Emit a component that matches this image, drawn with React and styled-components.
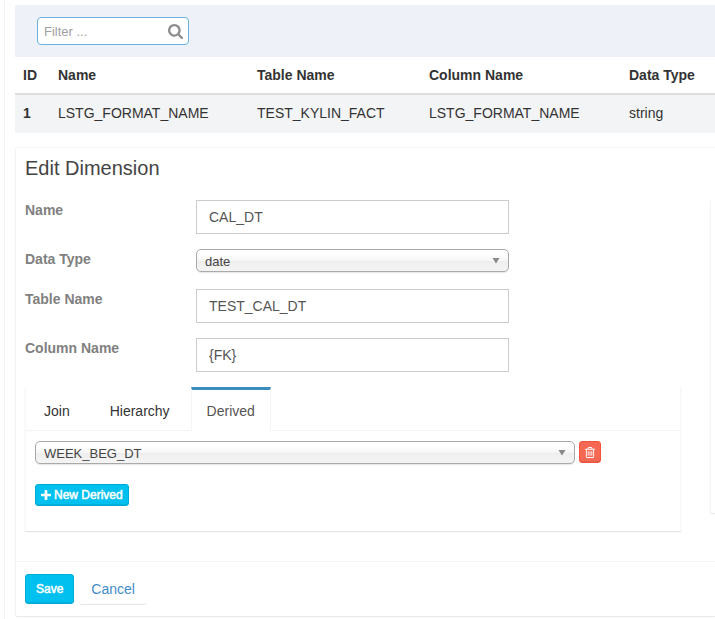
import React, { useState } from "react";
import styled, { createGlobalStyle } from "styled-components";

const GlobalStyle = createGlobalStyle`
  *, *::before, *::after { box-sizing: border-box; }
  body {
    margin: 0;
    background: #fff;
    color: #333;
    font: 14px/20px "Liberation Sans", Helvetica, Arial, sans-serif;
    overflow-x: hidden;
  }
  button, input, select { font-family: inherit; }
`;

const Page = styled.main`
  margin-left: 4px;
  padding: 5px 0 3px 10px;
  border-left: 1px solid #f4f4f4;
`;

const FilterBar = styled.div`
  display: flex;
  padding: 12px 22px;
  background: #eef1f7;
`;

const SearchBox = styled.label`
  display: flex;
  align-items: center;
  width: 152px;
  height: 28px;
  padding: 0 5px 0 6px;
  border: 1px solid #6bb3dc;
  border-radius: 4px;
  background: #fff;
  color: #8c8c8c;
`;

const SearchInput = styled.input`
  flex: 1;
  min-width: 0;
  padding: 0;
  border: 0;
  outline: 0;
  background: transparent;
  color: #555;
  font-size: 13px;
  &::placeholder { color: #a0a0a0; opacity: 1; }
`;

const Table = styled.table`
  width: 100%;
  table-layout: fixed;
  border-collapse: separate;
  border-spacing: 0;
  white-space: nowrap;
`;

const Col = styled.col`
  width: ${(p) => p.$width};
`;

const HeadCell = styled.th`
  padding: 8px;
  border-bottom: 2px solid #ddd;
  text-align: left;
`;

const Cell = styled.td`
  padding: 8px 8px 10px;
  background: #f3f4f5;
  font-weight: ${(p) => (p.$strong ? "bold" : "normal")};
`;

const Panel = styled.section`
  margin-top: 14px;
  border-left: 1px solid #f4f4f4;
  border-top: 1px solid #f7f7f7;
  border-radius: 3px 0 0 3px;
  box-shadow: 0 1px 1px rgba(0, 0, 0, 0.1);
`;

const Title = styled.h3`
  margin: 0;
  padding: 8px 9px 0;
  color: #444;
  font-size: 20px;
  font-weight: normal;
  line-height: 24px;
`;

const PanelBody = styled.div`
  display: flex;
  gap: 29px;
  padding: 20px 0 30px 9px;
`;

const Form = styled.form`
  flex: 1;
  min-width: 0;
`;

const SideCard = styled.aside`
  flex: 0 0 5px;
  align-self: flex-start;
  height: 313px;
  border-left: 1px solid #f4f4f4;
  border-radius: 3px 0 0 3px;
  box-shadow: 0 1px 1px rgba(0, 0, 0, 0.1);
`;

const Field = styled.div`
  display: grid;
  grid-template-columns: 171px minmax(0, 1fr);
  min-height: 25px;
  margin: 0 172px 15px 0;
`;

const FieldLabel = styled.label`
  color: #808080;
  font-weight: bold;
`;

const TextInput = styled.input`
  width: 100%;
  height: 34px;
  padding: 0 12px;
  border: 1px solid #ccc;
  border-radius: 0;
  background: #fff;
  color: #555;
  font-size: 14px;
`;

const SelectBox = styled.div`
  display: grid;
  flex: ${(p) => (p.$grow ? "1" : "none")};
  align-self: start;
  align-items: center;
  > * { grid-area: 1 / 1; }
  > svg { justify-self: end; margin-right: 9px; pointer-events: none; }
`;

const Select = styled.select`
  appearance: none;
  width: 100%;
  height: 23px;
  padding: 2px 24px 0 8px;
  border: 1px solid #aaa;
  border-radius: 5px;
  background: linear-gradient(#fff 20%, #f6f6f6 50%, #eee 52%, #f4f4f4 100%);
  box-shadow: 0 1px 1px rgba(0, 0, 0, 0.1);
  color: #444;
  font-size: 13px;
`;

const TabCard = styled.section`
  min-height: 144px;
  border-left: 1px solid #f7f7f7;
  border-right: 1px solid #f7f7f7;
  box-shadow: 0 1px 1px rgba(0, 0, 0, 0.1);
`;

const TabList = styled.div`
  display: flex;
  height: 44px;
  border-bottom: 1px solid #f4f4f4;
`;

const Tab = styled.button`
  height: 44px;
  margin-right: ${(p) => (p.$active ? "0" : "5px")};
  padding: 3px 16px 0 19px;
  border: 0;
  background: transparent;
  color: #333;
  font-size: 14px;
  cursor: pointer;
  &:first-child { padding-left: 18px; }
  ${(p) =>
    p.$active &&
    `
    padding: 0 15px;
    border: solid #f4f4f4;
    border-width: 3px 1px 0;
    border-top-color: #3c8dbc;
    background: #fff;
    color: #555;
  `}
`;

const TabContent = styled.div`
  padding: 10px 79px 0 9px;
`;

const DerivedRow = styled.div`
  display: flex;
  gap: 4px;
  margin-bottom: 20px;
`;

const Button = styled.button`
  display: inline-flex;
  align-items: center;
  justify-content: center;
  gap: 3px;
  height: ${(p) => (p.$small ? "22px" : "30px")};
  padding: ${(p) => (p.$small ? "0 5px" : "0 10px")};
  border: 1px solid #00acd6;
  border-radius: 3px;
  background: #00c0ef;
  box-shadow: inset 0 -1px 0 rgba(0, 0, 0, 0.09);
  color: #fff;
  font-size: 12px;
  -webkit-text-stroke: 0.5px #fff;
  white-space: nowrap;
  cursor: pointer;
`;

const DeleteButton = styled(Button)`
  width: 22px;
  padding: 0;
  border-color: #f4543c;
  background: #f56954;
`;

const Footer = styled.footer`
  display: flex;
  gap: 5px;
  padding: 12px 9px 11px;
  border-top: 1px solid #f4f4f4;
`;

const CancelLink = styled.a`
  height: 31px;
  padding: 5px 12px;
  border-bottom: 1px solid #e6e6e6;
  border-radius: 3px;
  color: #428bca;
  text-decoration: none;
`;

const SearchIcon = () => (
  <svg width="15" height="15" viewBox="0 0 1664 1664" fill="currentColor" aria-hidden="true">
    <path d="M1152 704q0-185-131.500-316.500t-316.500-131.500-316.500 131.500-131.500 316.500 131.500 316.500 316.500 131.500 316.500-131.500 131.500-316.500zM1664 1536q0 52-38 90t-90 38q-54 0-90-38l-343-342q-179 124-399 124-143 0-273.500-55.500t-225-150-150-225-55.500-273.500 55.500-273.500 150-225 225-150 273.500-55.500 273.500 55.500 225 150 150 225 55.500 273.500q0 220-124 399l343 343q37 37 37 90z" />
  </svg>
);

const PlusIcon = () => (
  <svg width="10" height="10" viewBox="0 0 1408 1408" fill="currentColor" aria-hidden="true">
    <path d="M1408 608v192q0 40-28 68t-68 28h-416v416q0 40-28 68t-68 28h-192q-40 0-68-28t-28-68v-416h-416q-40 0-68-28t-28-68v-192q0-40 28-68t68-28h416v-416q0-40 28-68t68-28h192q40 0 68 28t28 68v416h416q40 0 68 28t28 68z" />
  </svg>
);

const TrashIcon = () => (
  <svg width="10" height="11" viewBox="0 0 1408 1536" fill="currentColor" aria-hidden="true">
    <path d="M512 608v576q0 14-9 23t-23 9h-64q-14 0-23-9t-9-23v-576q0-14 9-23t23-9h64q14 0 23 9t9 23zM768 608v576q0 14-9 23t-23 9h-64q-14 0-23-9t-9-23v-576q0-14 9-23t23-9h64q14 0 23 9t9 23zM1024 608v576q0 14-9 23t-23 9h-64q-14 0-23-9t-9-23v-576q0-14 9-23t23-9h64q14 0 23 9t9 23zM1152 1332v-948h-896v948q0 22 7 40.500t14.500 27 10.500 8.500h832q3 0 10.500-8.500t14.500-27 7-40.500zM480 256h448l-48-117q-7-9-17-11h-317q-10 2-17 11zM1408 288v64q0 14-9 23t-23 9h-96v948q0 83-47 143.500t-113 60.500h-832q-66 0-113-58.500t-47-141.500v-952h-96q-14 0-23-9t-9-23v-64q0-14 9-23t23-9h309l70-167q15-37 54-63t79-26h320q40 0 79 26t54 63l70 167h309q14 0 23 9t9 23z" />
  </svg>
);

const CaretIcon = () => (
  <svg width="8" height="7" viewBox="0 0 8 7" fill="#888" aria-hidden="true">
    <path d="M0.500 1h7L4 6.500z" />
  </svg>
);

const columns = [
  ["ID", "35px"],
  ["Name", "199px"],
  ["Table Name", "172px"],
  ["Column Name", "200px"],
  ["Data Type", "auto"],
];

const rows = [["1", "LSTG_FORMAT_NAME", "TEST_KYLIN_FACT", "LSTG_FORMAT_NAME", "string"]];

const fields = [
  { id: "name", label: "Name", value: "CAL_DT" },
  { id: "type", label: "Data Type", options: ["date", "string"] },
  { id: "table", label: "Table Name", value: "TEST_CAL_DT" },
  { id: "column", label: "Column Name", value: "{FK}" },
];

const tabs = ["Join", "Hierarchy", "Derived"];

function Dropdown({ options, grow, ...rest }) {
  return (
    <SelectBox $grow={grow}>
      <Select {...rest}>
        {options.map((option) => (
          <option key={option}>{option}</option>
        ))}
      </Select>
      <CaretIcon />
    </SelectBox>
  );
}

export default function App() {
  const [active, setActive] = useState("Derived");

  return (
    <>
      <GlobalStyle />
      <Page>
        <FilterBar>
          <SearchBox>
            <SearchInput type="text" placeholder="Filter ..." aria-label="Filter" />
            <SearchIcon />
          </SearchBox>
        </FilterBar>
        <Table>
          <colgroup>
            {columns.map(([name, width]) => (
              <Col key={name} $width={width} />
            ))}
          </colgroup>
          <thead>
            <tr>
              {columns.map(([name]) => (
                <HeadCell key={name} scope="col">{name}</HeadCell>
              ))}
            </tr>
          </thead>
          <tbody>
            {rows.map((row) => (
              <tr key={row[0]}>
                {row.map((value, i) => (
                  <Cell key={columns[i][0]} $strong={i === 0}>{value}</Cell>
                ))}
              </tr>
            ))}
          </tbody>
        </Table>

        <Panel>
          <Title>Edit Dimension</Title>
          <PanelBody>
            <Form id="dimension" onSubmit={(e) => e.preventDefault()}>
              {fields.map(({ id, label, value, options }) => (
                <Field key={id}>
                  <FieldLabel htmlFor={id}>{label}</FieldLabel>
                  {options ? (
                    <Dropdown id={id} options={options} />
                  ) : (
                    <TextInput id={id} type="text" defaultValue={value} />
                  )}
                </Field>
              ))}
              <TabCard>
                <TabList role="tablist">
                  {tabs.map((tab) => (
                    <Tab
                      key={tab}
                      type="button"
                      role="tab"
                      aria-selected={tab === active}
                      $active={tab === active}
                      onClick={() => setActive(tab)}
                    >
                      {tab}
                    </Tab>
                  ))}
                </TabList>
                {active === "Derived" && (
                  <TabContent role="tabpanel">
                    <DerivedRow>
                      <Dropdown grow options={["WEEK_BEG_DT"]} aria-label="Derived column" />
                      <DeleteButton type="button" $small aria-label="Delete">
                        <TrashIcon />
                      </DeleteButton>
                    </DerivedRow>
                    <Button type="button" $small>
                      <PlusIcon />
                      New Derived
                    </Button>
                  </TabContent>
                )}
              </TabCard>
            </Form>
            <SideCard />
          </PanelBody>
          <Footer>
            <Button type="submit" form="dimension">Save</Button>
            <CancelLink href="#cancel">Cancel</CancelLink>
          </Footer>
        </Panel>
      </Page>
    </>
  );
}
